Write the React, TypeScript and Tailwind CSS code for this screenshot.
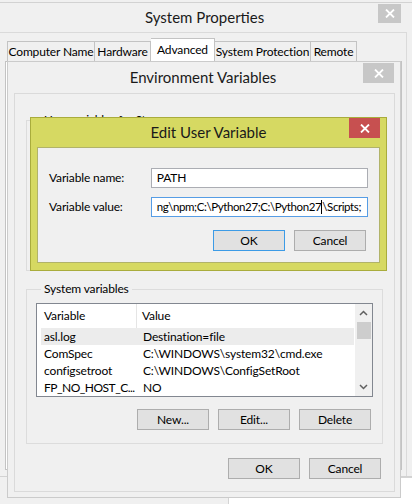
import React from "react";

const font = { fontFamily: 'Lato, "Noto Sans", sans-serif' };

function Btn({ label, primary = false }: { label: string; primary?: boolean }) {
  return (
    <div
      className={`w-[72px] h-[21px] flex items-center justify-center text-black bg-[#e1e1e1] border ${
        primary ? "border-[#3c9be6]" : "border-[#adadad]"
      }`}
    >
      {label}
    </div>
  );
}

function CloseX({ className }: { className: string }) {
  return (
    <div className={`absolute flex items-center justify-center ${className}`}>
      <svg width="10" height="9" viewBox="0 0 10 9">
        <path d="M1 0.5 L9 8.5 M9 0.5 L1 8.5" stroke="white" strokeWidth="1.8" />
      </svg>
    </div>
  );
}

const rows: [string, string][] = [
  ["asl.log", "Destination=file"],
  ["ComSpec", "C:\\WINDOWS\\system32\\cmd.exe"],
  ["configsetroot", "C:\\WINDOWS\\ConfigSetRoot"],
  ["FP_NO_HOST_C...", "NO"],
];

export default function App() {
  return (
    <div className="relative w-[412px] h-[504px] overflow-hidden bg-[#f0f0f0] text-black text-[12px] tracking-[-0.15px]" style={font}>
      {/* desktop remnant bottom-right */}
      <div className="absolute left-[228px] top-[477px] w-[200px] h-[40px] bg-white border-l border-t border-[#d4d4d4]" />

      {/* System Properties window */}
      <div className="absolute left-[-8px] top-[2px] w-[440px] h-[475px] bg-[#f0f0f0] border border-[#d2d2d2] flex flex-col">
        <div className="h-[29px] flex items-center pl-[152px] pr-[30px] text-[15px] tracking-normal text-[#1a1a1a] whitespace-nowrap">
          System Properties
        </div>
        <div className="flex-1 mr-[24px] border-t border-r border-[#dadada] flex flex-col pt-[5px] pl-[12px]">
          <div className="flex items-end h-[23px] pl-[2px] whitespace-nowrap">
            <div className="h-[20px] w-[88px] border border-[#c3c3c3] border-b-0 bg-[#f0f0f0] flex items-center justify-center">Computer Name</div>
            <div className="h-[20px] w-[56px] border border-l-0 border-[#c3c3c3] border-b-0 bg-[#f0f0f0] flex items-center justify-center">Hardware</div>
            <div className="h-[23px] w-[64px] border border-l-0 border-[#c3c3c3] border-b-0 bg-white flex items-start pt-[2px] justify-center">Advanced</div>
            <div className="h-[20px] w-[96px] border border-l-0 border-[#c3c3c3] border-b-0 bg-[#f0f0f0] flex items-center justify-center">System Protection</div>
            <div className="h-[20px] w-[46px] border border-l-0 border-[#c3c3c3] border-b-0 bg-[#f0f0f0] flex items-center justify-center">Remote</div>
          </div>
          <div className="w-[397px] h-[409px] border border-[#c3c3c3] bg-white" />
        </div>
      </div>
      <CloseX className="left-[378px] top-[4px] w-[23px] h-[19px] bg-[#c7c7c7]" />

      {/* Environment Variables window */}
      <div className="absolute left-[7px] top-[61px] w-[394px] h-[437px] bg-[#f0f0f0] border border-[#cbcbcb] flex flex-col">
        <div className="h-[31px] flex items-center justify-center text-[15px] tracking-normal text-[#1a1a1a] pr-[2px] whitespace-nowrap">
          Environment Variables
        </div>
        <div className="flex-1 ml-[6px] mr-[5px] mb-[5px] border border-[#dadada] bg-[#f0f0f0] flex flex-col px-[11px] pt-[18px]">
          <fieldset className="h-[159px] border border-[#dcdcdc] px-[9px]">
            <legend className="ml-[5px] px-[3px] leading-[16px] whitespace-nowrap">User variables for Stan</legend>
          </fieldset>
          <fieldset className="mt-[10px] h-[163px] border border-[#dcdcdc] px-[9px] pb-[14px]">
            <legend className="ml-[5px] px-[3px] leading-[16px] whitespace-nowrap">System variables</legend>
            <div className="mt-[6px] h-[94px] border border-[#828790] bg-white flex overflow-hidden">
              <div className="flex-1 flex flex-col">
                <div className="h-[24px] flex shrink-0 items-center">
                  <div className="w-[100px] h-full flex items-center pl-[7px] border-r border-[#e5e5e5]">Variable</div>
                  <div className="flex-1 pl-[5px]">Value</div>
                </div>
                {rows.map(([k, v], i) => (
                  <div
                    key={k}
                    className={`ml-[4px] mr-[1px] h-[17px] shrink-0 flex items-center ${i === 0 ? "bg-[#ececec]" : ""}`}
                  >
                    <div className={`w-[96px] shrink-0 pl-[3px] whitespace-nowrap ${i === 3 ? "tracking-[-0.5px]" : ""}`}>{k}</div>
                    <div className="flex-1 pl-[6px] whitespace-nowrap">{v}</div>
                  </div>
                ))}
              </div>
              <div className="w-[17px] bg-[#f0f0f0] flex flex-col items-center">
                <div className="h-[18px] flex items-center justify-center">
                  <svg width="9" height="6" viewBox="0 0 9 6">
                    <path d="M1 5 L4.5 1.5 L8 5" fill="none" stroke="#606060" strokeWidth="1.5" />
                  </svg>
                </div>
                <div className="w-[14px] h-[17px] bg-[#cdcdcd]" />
                <div className="flex-1" />
                <div className="h-[18px] flex items-center justify-center">
                  <svg width="9" height="6" viewBox="0 0 9 6">
                    <path d="M1 1 L4.5 4.5 L8 1" fill="none" stroke="#606060" strokeWidth="1.5" />
                  </svg>
                </div>
              </div>
            </div>
            <div className="mt-[12px] flex justify-end gap-[9px] pr-[2px]">
              <Btn label="New..." />
              <Btn label="Edit..." />
              <Btn label="Delete" />
            </div>
          </fieldset>
          <div className="mt-[14px] flex justify-end gap-[9px] pr-[2px]">
            <Btn label="OK" />
            <Btn label="Cancel" />
          </div>
        </div>
      </div>
      <CloseX className="left-[363px] top-[63px] w-[31px] h-[20px] bg-[#c7c7c7]" />

      {/* Edit User Variable dialog */}
      <div className="absolute left-[30px] top-[117px] w-[357px] h-[154px] bg-[#d6d962] border border-[#a9ac3c] flex flex-col">
        <div className="h-[29px] flex items-center justify-center text-[15px] tracking-normal text-[#1a1a1a] whitespace-nowrap">
          Edit User Variable
        </div>
        <div className="flex-1 ml-[6px] mr-[6px] mb-[7px] border border-[#b1b36a] bg-[#f0f0f0] flex flex-col pl-[11px] pr-[11px] pt-[20px]">
          <div className="flex items-center h-[20px]">
            <div className="w-[102px] whitespace-nowrap">Variable name:</div>
            <div className="w-[218px] h-[20px] border border-[#abadb3] bg-white flex items-center pl-[5px]">PATH</div>
          </div>
          <div className="flex items-center h-[20px] mt-[9px]">
            <div className="w-[102px] whitespace-nowrap">Variable value:</div>
            <div className="w-[218px] h-[20px] border border-[#569de5] bg-white flex items-center pl-[5px] whitespace-nowrap overflow-hidden text-[11.5px] tracking-[-0.4px]">
              <span>ng\npm;C:\Python27;C:\Python27</span>
              <span className="inline-block w-px h-[14px] bg-black" />
              <span>\Scripts;</span>
            </div>
          </div>
          <div className="mt-[13px] flex justify-end gap-[9px] pr-[2px]">
            <Btn label="OK" primary />
            <Btn label="Cancel" />
          </div>
        </div>
      </div>
      <CloseX className="left-[349px] top-[118px] w-[31px] h-[20px] bg-[#c75050]" />
    </div>
  );
}
